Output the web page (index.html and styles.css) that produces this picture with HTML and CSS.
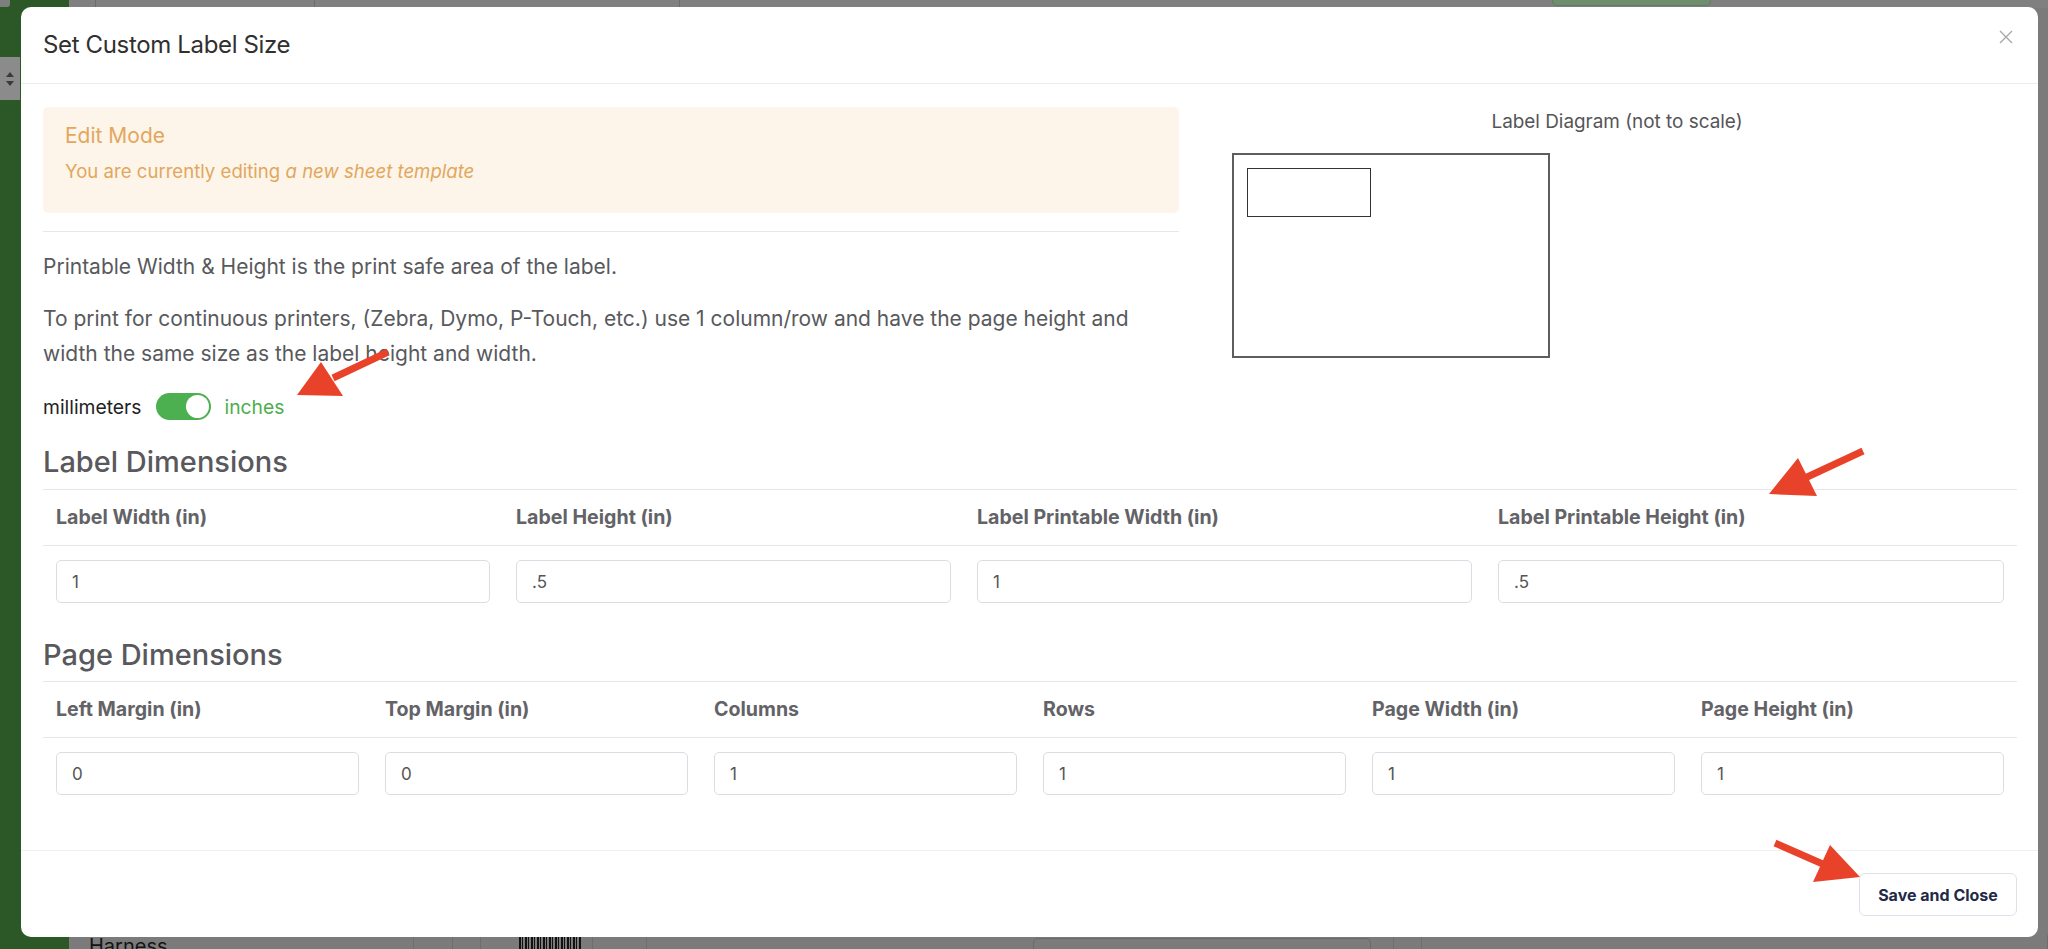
FILE: index.html
```html
<!DOCTYPE html>
<html lang="en">
<head>
<meta charset="utf-8">
<title>Set Custom Label Size</title>
<link rel="stylesheet" href="styles.css">
</head>
<body>
<div class="page">
  <aside class="sidebar">
    <div class="side-top"></div>
    <div class="side-sort">
      <svg width="10" height="16" viewBox="0 0 10 16"><path d="M5 1 L9 6 H1 Z M5 15 L9 10 H1 Z" fill="#3a3a3a"/></svg>
    </div>
  </aside>
  <main class="main">
    <div class="topbar">
      <div class="tb-cell tb-a"></div>
      <div class="tb-cell tb-b"></div>
      <div class="tb-cell tb-c"></div>
      <div class="tb-spacer"></div>
      <div class="tb-btn"></div>
      <div class="tb-end"></div>
    </div>
    <div class="main-fill"></div>
    <div class="bottom-row">
      <div class="br-cell br-name"><span class="harness">Harness</span></div>
      <div class="br-cell br-a"></div>
      <div class="br-cell br-b"></div>
      <div class="br-cell br-code"><span class="barcode"></span></div>
      <div class="br-cell br-c"></div>
      <div class="br-cell br-d"><span class="br-box"></span></div>
      <div class="br-cell br-e"></div>
    </div>
  </main>
</div>

<div class="modal" role="dialog" aria-labelledby="modal-title">
  <div class="modal-header">
    <h2 class="modal-title" id="modal-title">Set Custom Label Size</h2>
    <button class="close" type="button" aria-label="Close">
      <svg width="14" height="14" viewBox="0 0 14 14"><path d="M1 1 L13 13 M13 1 L1 13" stroke="#a6a6a6" stroke-width="1.3" fill="none"/></svg>
    </button>
  </div>

  <div class="modal-body">
    <div class="body-grid">
      <div class="col-left">
        <div class="alert">
          <h4 class="alert-title">Edit Mode</h4>
          <p class="alert-text">You are currently editing <em>a new sheet template</em></p>
        </div>
        <hr class="sep">
        <p class="desc desc-first">Printable Width &amp; Height is the print safe area of the label.</p>
        <p class="desc">To print for continuous printers, (Zebra, Dymo, P-Touch, etc.) use 1 column/row and have the page height and width the same size as the label height and width.</p>
        <div class="unit-toggle">
          <span class="unit-off">millimeters</span>
          <span class="switch"><span class="knob"></span></span>
          <span class="unit-on">inches</span>
        </div>
      </div>
      <div class="col-right">
        <div class="diagram-caption">Label Diagram (not to scale)</div>
        <div class="diagram"><div class="diagram-label"></div></div>
      </div>
    </div>

    <h3 class="section-title section-label">Label Dimensions</h3>
    <table class="dims dims-label">
      <colgroup><col class="lc1"><col class="lc2"><col class="lc3"><col class="lc4"></colgroup>
      <thead>
        <tr><th>Label Width (in)</th><th>Label Height (in)</th><th>Label Printable Width (in)</th><th>Label Printable Height (in)</th></tr>
      </thead>
      <tbody>
        <tr>
          <td><input class="field" type="text" value="1"></td>
          <td><input class="field" type="text" value=".5"></td>
          <td><input class="field" type="text" value="1"></td>
          <td><input class="field" type="text" value=".5"></td>
        </tr>
      </tbody>
    </table>

    <h3 class="section-title section-page">Page Dimensions</h3>
    <table class="dims dims-page">
      <colgroup><col class="pc"><col class="pc"><col class="pc"><col class="pc"><col class="pc"><col class="pc"></colgroup>
      <thead>
        <tr><th>Left Margin (in)</th><th>Top Margin (in)</th><th>Columns</th><th>Rows</th><th>Page Width (in)</th><th>Page Height (in)</th></tr>
      </thead>
      <tbody>
        <tr>
          <td><input class="field" type="text" value="0"></td>
          <td><input class="field" type="text" value="0"></td>
          <td><input class="field" type="text" value="1"></td>
          <td><input class="field" type="text" value="1"></td>
          <td><input class="field" type="text" value="1"></td>
          <td><input class="field" type="text" value="1"></td>
        </tr>
      </tbody>
    </table>
  </div>

  <div class="modal-footer">
    <button class="btn-save" type="button">Save and Close</button>
  </div>
</div>

<svg class="annotations" width="2048" height="949" viewBox="0 0 2048 949" aria-hidden="true">
  <g fill="#e8432a" stroke="#e8432a">
    <line x1="388" y1="352" x2="333" y2="378" stroke-width="7"/>
    <polygon points="297,395 321,362 343,396" stroke="none"/>
    <line x1="1863" y1="451" x2="1805" y2="478" stroke-width="7"/>
    <polygon points="1769,494 1798,458 1817,496" stroke="none"/>
    <line x1="1775" y1="843" x2="1825" y2="865" stroke-width="7"/>
    <polygon points="1860,877 1830,845 1813,882" stroke="none"/>
  </g>
</svg>
</body>
</html>
```

FILE: styles.css
```css
* { box-sizing: border-box; }
html, body { margin: 0; padding: 0; }
body {
  width: 2048px;
  height: 949px;
  overflow: hidden;
  position: relative;
  background: #7b7b7b;
  font-family: Inter, "Noto Sans", "Liberation Sans", sans-serif;
}

/* ---------- dimmed page behind the modal ---------- */
.page { display: flex; height: 949px; }
.sidebar {
  width: 69px;
  background: #2b5826;
  display: flex;
  flex-direction: column;
}
.side-top { height: 7px; width: 10px; background: #7e7e7e; border-radius: 0 0 3px 0; }
.side-sort {
  margin-top: 50px;
  width: 20px;
  height: 43px;
  background: #8b8b8b;
  display: flex;
  align-items: center;
  justify-content: center;
}
.main { flex: 1; display: flex; flex-direction: column; background: #7b7b7b; }
.topbar { height: 8px; display: flex; background: #808080; }
.tb-cell { border-right: 1px solid #6c6c6c; }
.tb-a { width: 27px; }
.tb-b { width: 219px; }
.tb-c { width: 365px; }
.tb-spacer { flex: 1; }
.tb-btn { width: 159px; height: 6px; background: #6f8d6f; border: 1px solid #5f7d5f; border-top: 0; border-radius: 0 0 5px 5px; }
.tb-end { width: 337px; }
.main-fill { flex: 1; }
.bottom-row { height: 14px; display: flex; overflow: hidden; background: #7b7b7b; }
.br-cell { border-right: 1px solid #6e6e6e; height: 14px; }
.br-name { width: 345px; padding-left: 20px; }
.harness { display: block; font-size: 20px; line-height: 22px; color: #141414; }
.br-a { width: 39px; }
.br-b { width: 28px; }
.br-code { width: 112px; padding-left: 38px; }
.barcode {
  display: block;
  width: 63px;
  height: 14px;
  background: repeating-linear-gradient(90deg, #111 0 2px, #7b7b7b 2px 3px, #111 3px 4px, #7b7b7b 4px 6px);
}
.br-c { width: 54px; }
.br-d { width: 747px; padding: 3px 0 0 386px; }
.br-box { display: block; width: 338px; height: 14px; border: 1px solid #6a6a6a; border-bottom: 0; border-radius: 5px 5px 0 0; }
.br-e { flex: 1; border-left: 1px solid #6e6e6e; margin-left: 27px; }

/* ---------- modal ---------- */
.modal {
  position: absolute;
  left: 21px;
  top: 7px;
  width: 2017px;
  height: 930px;
  background: #fff;
  border-radius: 10px;
  display: flex;
  flex-direction: column;
  overflow: hidden;
}
.modal-header {
  height: 77px;
  border-bottom: 1px solid #ececef;
  padding: 0 25px 0 22px;
  display: flex;
  align-items: center;
  justify-content: space-between;
}
.modal-title {
  margin: 0;
  font-size: 24px;
  font-weight: 400;
  letter-spacing: -0.35px;
  color: #303030;
  line-height: 30px;
}
.close {
  align-self: flex-start;
  margin-top: 23px;
  padding: 0;
  border: 0;
  background: none;
  width: 14px;
  height: 14px;
  display: block;
}
.close svg { display: block; }

.modal-body {
  flex: 1;
  padding: 23px 21px 0 22px;
}
.body-grid {
  display: grid;
  grid-template-columns: 1136px 800px;
  column-gap: 38px;
}

.alert {
  height: 106px;
  background: #fdf5ea;
  border-radius: 5px;
  padding: 17px 22px 0;
  color: #e2a75d;
}
.alert-title {
  margin: 0;
  font-size: 21px;
  line-height: 24px;
  font-weight: 400;
}
.alert-text {
  margin: 11px 0 0;
  font-size: 18.6px;
  line-height: 24px;
}
.alert-text em { font-style: italic; }

.sep {
  margin: 18px 0 17px;
  border: 0;
  border-top: 1px solid #e7e7ea;
  height: 0;
}
.desc {
  margin: 0;
  max-width: 1110px;
  font-size: 21px;
  line-height: 35px;
  color: #58595c;
}
.desc-first { margin-bottom: 17px; }

.unit-toggle {
  margin-top: 22px;
  height: 27px;
  display: flex;
  align-items: center;
  gap: 14px;
  font-size: 19.3px;
}
.unit-off { color: #222; }
.unit-on { color: #4cae4c; }
.switch {
  width: 55px;
  height: 27px;
  border-radius: 14px;
  background: #4caf50;
  position: relative;
  display: block;
}
.knob {
  position: absolute;
  right: 2px;
  top: 2px;
  width: 23px;
  height: 23px;
  border-radius: 50%;
  background: #fff;
}

.diagram-caption {
  text-align: center;
  font-size: 18.9px;
  line-height: 30px;
  color: #555558;
}
.diagram {
  margin: 16px 0 0 15px;
  width: 318px;
  height: 205px;
  border: 2px solid #5e5e5e;
  padding: 13px 0 0 13px;
}
.diagram-label {
  width: 124px;
  height: 49px;
  border: 1px solid #333;
}

.section-title {
  margin: 0;
  font-size: 29px;
  line-height: 35px;
  font-weight: 500;
  color: #59595d;
}
.section-label { margin: 24px 0 10px; }
.section-page { margin: 34px 0 9px; }

.dims {
  width: 1974px;
  border-collapse: separate;
  border-spacing: 0;
  table-layout: fixed;
}
.lc1 { width: 460px; }
.lc2 { width: 461px; }
.lc3 { width: 521px; }
.lc4 { width: 532px; }
.pc { width: 329px; }
.dims th {
  border-top: 1px solid #e6e6eb;
  border-bottom: 1px solid #e6e6eb;
  padding: 0 13px;
  line-height: 55px;
  text-align: left;
  font-size: 19.6px;
  font-weight: 700;
  color: #636367;
}
.dims td { padding: 14px 13px 0; }
.field {
  display: block;
  width: 100%;
  height: 43px;
  border: 1px solid #dcdce3;
  border-radius: 5px;
  padding: 0 15px;
  font-family: Inter, "Noto Sans", sans-serif;
  font-size: 17px;
  color: #555;
  background: #fff;
  outline: none;
}

.modal-footer {
  border-top: 1px solid #f0f0f2;
  padding: 22px 21px 21px;
  display: flex;
  justify-content: flex-end;
}
.btn-save {
  width: 158px;
  height: 43px;
  border: 1px solid #dde2ea;
  border-radius: 6px;
  background: #fff;
  font-family: Inter, "Noto Sans", sans-serif;
  font-size: 16px;
  font-weight: 700;
  color: #1f2b46;
  padding: 0;
}

/* ---------- annotation arrows ---------- */
.annotations {
  position: absolute;
  left: 0;
  top: 0;
  pointer-events: none;
}
```
